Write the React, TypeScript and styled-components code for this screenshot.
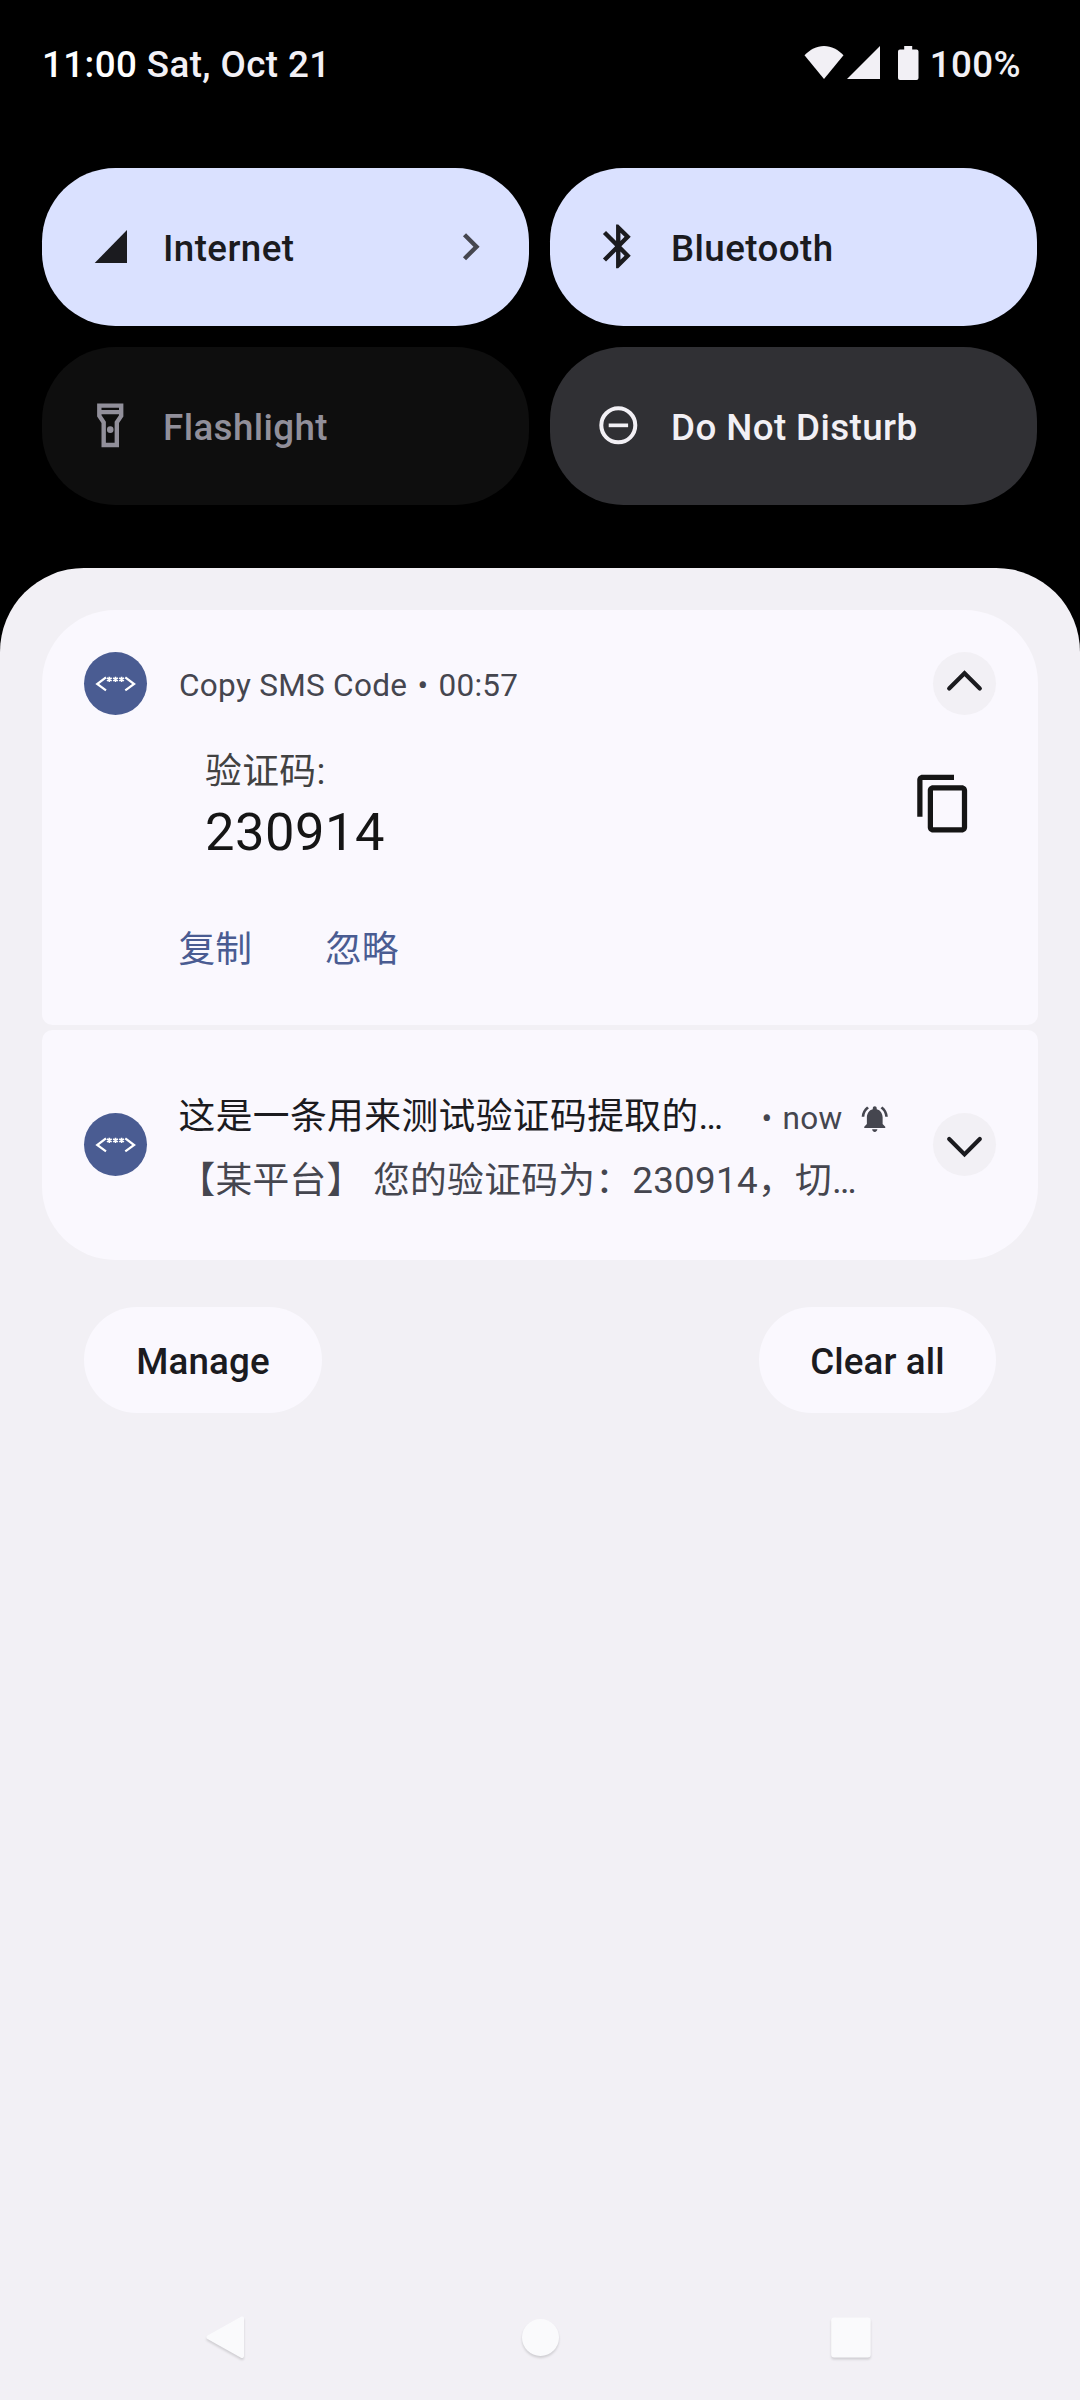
import React from "react";
import styled, { createGlobalStyle } from "styled-components";

const Global = createGlobalStyle`
  * { box-sizing: border-box; }
  body { margin: 0; background: #000; font-family: Roboto, "Noto Sans CJK SC", sans-serif; }
`;

const Screen = styled.div`
  width: 1080px;
  height: 2400px;
  background: #000;
  display: flex;
  flex-direction: column;
  overflow: hidden;
  letter-spacing: 0.4px;
`;

const StatusBar = styled.header`
  height: 168px;
  padding: 43px 59px 0 42px;
  display: flex;
  justify-content: space-between;
  align-items: flex-start;
  font-size: 36.75px;
  font-weight: 500;
  line-height: 43px;
  color: #f2f0f5;
  white-space: pre;
`;

const Clock = styled.span`
  color: #fff;
`;

const StatusIcons = styled.div`
  display: flex;
  align-items: flex-start;
`;

const Percent = styled.span`
  margin-left: 11px;
`;

const Glyph = styled.svg<{ $w: number; $h: number; $mt?: number; $ml?: number }>`
  display: block;
  flex: none;
  width: ${(p) => p.$w}px;
  height: ${(p) => p.$h}px;
  margin-top: ${(p) => p.$mt ?? 0}px;
  margin-left: ${(p) => p.$ml ?? 0}px;
  fill: currentColor;
`;

const Tiles = styled.section`
  display: grid;
  grid-template-columns: 487px 487px;
  grid-auto-rows: 158px;
  gap: 21px;
  padding: 0 42px;
  height: 400px;
`;

const Tile = styled.div<{ $bg: string; $fg: string }>`
  display: flex;
  align-items: center;
  padding: 0 37px 0 42px;
  border-radius: 73.5px;
  background: ${(p) => p.$bg};
  color: ${(p) => p.$fg};
`;

const TileLabel = styled.span`
  flex: 1;
  margin-left: 26.5px;
  padding-top: 3px;
  font-size: 36.75px;
  font-weight: 500;
  line-height: 43px;
`;

const Shade = styled.main`
  flex: 1;
  display: flex;
  flex-direction: column;
  padding: 42px 42px 0;
  border-radius: 84px 84px 0 0;
  background: #f2f0f5;
`;

const Expanded = styled.article`
  height: 415px;
  padding: 42px 42px 0;
  border-radius: 73.5px 73.5px 10.5px 10.5px;
  background: #faf8fe;
`;

const HeaderRow = styled.div`
  display: flex;
  align-items: center;
  height: 63px;
`;

const AppIcon = styled.div`
  flex: none;
  width: 63px;
  height: 63px;
  border-radius: 50%;
  background: #4a5c92;
  color: #fff;
`;

const HeaderText = styled.div`
  flex: 1;
  margin-left: 32px;
  padding-top: 3px;
  font-size: 31.5px;
  line-height: 37px;
  letter-spacing: 0.3px;
  color: #45464f;
  white-space: pre;
`;

const Bullet = styled.span`
  margin: 0 2px;
`;

const Toggle = styled.div`
  flex: none;
  width: 63px;
  height: 63px;
  border-radius: 50%;
  background: #f2f0f5;
  color: #1b1b1f;
`;

const Body = styled.div`
  display: flex;
  justify-content: space-between;
  height: 189px;
  padding: 29px 21px 0 121px;
`;

const CodeLabel = styled.div`
  font-size: 36.75px;
  line-height: 55px;
  color: #424242;
`;

const Code = styled.div`
  padding-top: 2px;
  font-size: 52.5px;
  line-height: 63px;
  letter-spacing: 0.5px;
  color: #151515;
`;

const Actions = styled.div`
  display: flex;
  gap: 73px;
  padding-left: 94.5px;
  padding-top: 19px;
  font-size: 36.75px;
  line-height: 54px;
  letter-spacing: 0;
  color: #4a5c92;
`;

const Collapsed = styled.article`
  display: flex;
  align-items: center;
  height: 230px;
  margin-top: 5px;
  padding: 0 42px 1px;
  border-radius: 10.5px 10.5px 73.5px 73.5px;
  background: #faf8fe;
`;

const Message = styled.div`
  flex: 1;
  margin-left: 31.5px;
  padding-top: 8px;
  white-space: pre;
`;

const TitleRow = styled.div`
  display: flex;
  align-items: center;
  height: 64px;
`;

const Title = styled.div`
  width: 581px;
  font-size: 36.75px;
  line-height: 54px;
  color: #1b1b1f;
`;

const Meta = styled.div`
  display: flex;
  align-items: center;
  padding-top: 4px;
  font-size: 31.5px;
  line-height: 37px;
  letter-spacing: 0.3px;
  color: #45464f;
`;

const Preview = styled.div`
  font-size: 36.75px;
  line-height: 64px;
  letter-spacing: 0.28px;
  color: #45464f;
`;

const Footer = styled.div`
  display: flex;
  justify-content: space-between;
  padding: 47px 42px 0;
`;

const Pill = styled.button<{ $w: number }>`
  width: ${(p) => p.$w}px;
  height: 106px;
  padding: 2px 0 0;
  border: 0;
  border-radius: 53px;
  background: #faf8fe;
  color: #1b1b1f;
  font: 500 36.75px/43px Roboto, sans-serif;
  letter-spacing: 0.1px;
`;

const NavBar = styled.nav`
  display: flex;
  align-items: center;
  justify-content: space-between;
  height: 126px;
  margin-top: auto;
  padding: 0 151px;
  color: #fafafc;
`;

const NavGlyph = styled.svg`
  display: block;
  width: 63px;
  height: 63px;
  fill: currentColor;
  filter: drop-shadow(0 2.5px 1px rgba(0, 0, 0, 0.14));
`;

const star = (x: number) => `M${x} 24.7v5.4M${x - 2.4} 26l4.8 2.8M${x + 2.4} 26l-4.8 2.8`;

const CodeIcon = () => (
  <AppIcon>
    <Glyph $w={63} $h={63} viewBox="0 0 63 63">
      <g fill="none" stroke="currentColor">
        <path d="M22 25.400L13.200 32L22 38.400M41.300 25.400L50.100 32L41.300 38.400" strokeWidth="2.200" />
        <path d={star(25.3) + star(31.5) + star(37.6)} strokeWidth="1.6" />
      </g>
    </Glyph>
  </AppIcon>
);

const Chevron = ({ up }: { up?: boolean }) => (
  <Toggle>
    <Glyph $w={63} $h={63} viewBox="0 0 63 63">
      <path
        d={up ? "M16.2 36.6L31.5 21.3L46.8 36.6" : "M16.2 26.1L31.5 41.4L46.8 26.1"}
        fill="none"
        stroke="currentColor"
        strokeWidth="4.2"
        strokeLinecap="round"
      />
    </Glyph>
  </Toggle>
);

export default function App() {
  return (
    <Screen>
      <Global />
      <StatusBar>
        <span>
          <Clock>11:00</Clock> Sat, Oct 21
        </span>
        <StatusIcons>
          <Glyph $w={40} $h={34} $mt={3} viewBox="0 0 40 34">
            <path d="M.5 9.2C6 3.6 12.500 0 20 0s14 3.600 19.500 9.200L20 33z" />
          </Glyph>
          <Glyph $w={33} $h={33} $mt={3} $ml={3} viewBox="0 0 33 33">
            <path d="M33 0v33H0z" />
          </Glyph>
          <Glyph $w={20.5} $h={34} $mt={3} $ml={18.5} viewBox="0 0 20.500 34">
            <path d="M6.200 0h8v3.500h4.300a2 2 0 0 1 2 2V32a2 2 0 0 1-2 2H2a2 2 0 0 1-2-2V5.500a2 2 0 0 1 2-2h4.200z" />
          </Glyph>
          <Percent>100%</Percent>
        </StatusIcons>
      </StatusBar>

      <Tiles>
        <Tile $bg="#dae1ff" $fg="#1b1b1f">
          <Glyph $w={52.5} $h={52.5} $mt={-1.5} viewBox="0 0 52.500 52.500">
            <path d="M43 10v33H10.700z" />
          </Glyph>
          <TileLabel>Internet</TileLabel>
          <Glyph $w={32} $h={52} viewBox="0 0 32 52">
            <path d="M4.500 13.700L16.500 25.700L4.500 37.700" fill="none" stroke="#45464f" strokeWidth="4.400" />
          </Glyph>
        </Tile>
        <Tile $bg="#dae1ff" $fg="#1b1b1f">
          <Glyph $w={52.5} $h={52.5} $mt={-1.5} viewBox="0 0 24 24">
            <path d="M17.710 7.710L12 2h-1v7.590L6.410 5 5 6.410 10.590 12 5 17.590 6.410 19 11 14.410V22h1l5.710-5.710-4.300-4.290 4.300-4.290zM13 5.830l1.880 1.880L13 9.590V5.830zm1.880 10.460L13 18.170v-3.760l1.880 1.880z" />
          </Glyph>
          <TileLabel>Bluetooth</TileLabel>
        </Tile>
        <Tile $bg="#0e0e0e" $fg="#918f9a">
          <Glyph $w={52.5} $h={52.5} $mt={-1.5} viewBox="0 0 24 24">
            <path d="M18 2H6v6l2 3v11h8V11l2-3V2zm-2 2v1H8V4h8zm-2 6.400V20h-4v-9.600l-2-3V7h8v.4l-2 3z" />
            <circle cx="12" cy="14" r="1.500" />
          </Glyph>
          <TileLabel>Flashlight</TileLabel>
        </Tile>
        <Tile $bg="#303034" $fg="#f2f0f5">
          <Glyph $w={52.5} $h={52.5} $mt={-1.5} viewBox="0 0 52.500 52.500">
            <circle cx="26.300" cy="26.300" r="17" fill="none" stroke="currentColor" strokeWidth="4" />
            <path d="M16.700 24.500h19.400v3.700H16.700z" />
          </Glyph>
          <TileLabel>Do Not Disturb</TileLabel>
        </Tile>
      </Tiles>

      <Shade>
        <Expanded>
          <HeaderRow>
            <CodeIcon />
            <HeaderText>
              Copy SMS Code <Bullet>•</Bullet> 00:57
            </HeaderText>
            <Chevron up />
          </HeaderRow>
          <Body>
            <div>
              <CodeLabel>验证码:</CodeLabel>
              <Code>230914</Code>
            </div>
            <Glyph $w={63} $h={63} $mt={28} viewBox="0 0 24 24" color="#151515">
              <path d="M16 1H4c-1.100 0-2 .9-2 2v14h2V3h12V1zm3 4H8c-1.100 0-2 .9-2 2v14c0 1.100.9 2 2 2h11c1.100 0 2-.9 2-2V7c0-1.100-.9-2-2-2zm0 16H8V7h11v14z" />
            </Glyph>
          </Body>
          <Actions>
            <span>复制</span>
            <span>忽略</span>
          </Actions>
        </Expanded>

        <Collapsed>
          <CodeIcon />
          <Message>
            <TitleRow>
              <Title>这是一条用来测试验证码提取的…</Title>
              <Meta>
                <span>
                  <Bullet>•</Bullet> now
                </span>
                <Glyph $w={31.5} $h={31.5} $ml={17} viewBox="0 0 24 24">
                  <path d="M12 22c1.100 0 2-.9 2-2h-4c0 1.100.9 2 2 2zm6-6v-5c0-3.070-1.630-5.640-4.500-6.320V4c0-.83-.67-1.500-1.500-1.500s-1.500.67-1.500 1.500v.68C7.640 5.360 6 7.920 6 11v5l-2 2v1h16v-1l-2-2zM7.580 4.080L6.150 2.650C3.750 4.480 2.170 7.300 2.030 10.500h2c.15-2.650 1.510-4.970 3.550-6.420zm12.390 6.420h2c-.15-3.200-1.730-6.020-4.120-7.850l-1.420 1.430c2.020 1.450 3.390 3.770 3.540 6.420z" />
                </Glyph>
              </Meta>
            </TitleRow>
            <Preview>【某平台】 您的验证码为：230914，切…</Preview>
          </Message>
          <Chevron />
        </Collapsed>

        <Footer>
          <Pill $w={238}>Manage</Pill>
          <Pill $w={237}>Clear all</Pill>
        </Footer>

        <NavBar>
          <NavGlyph viewBox="0 0 63 63">
            <path d="M48.500 10.500a2 2 0 0 1 2.500 2V50a2 2 0 0 1-3 1.800L14.500 33a2 2 0 0 1 0-3.500z" />
          </NavGlyph>
          <NavGlyph viewBox="0 0 63 63">
            <circle cx="31.500" cy="31.500" r="18.500" />
          </NavGlyph>
          <NavGlyph viewBox="0 0 63 63">
            <rect x="7.200" y="11.500" width="39.500" height="40" rx="3" />
          </NavGlyph>
        </NavBar>
      </Shade>
    </Screen>
  );
}
